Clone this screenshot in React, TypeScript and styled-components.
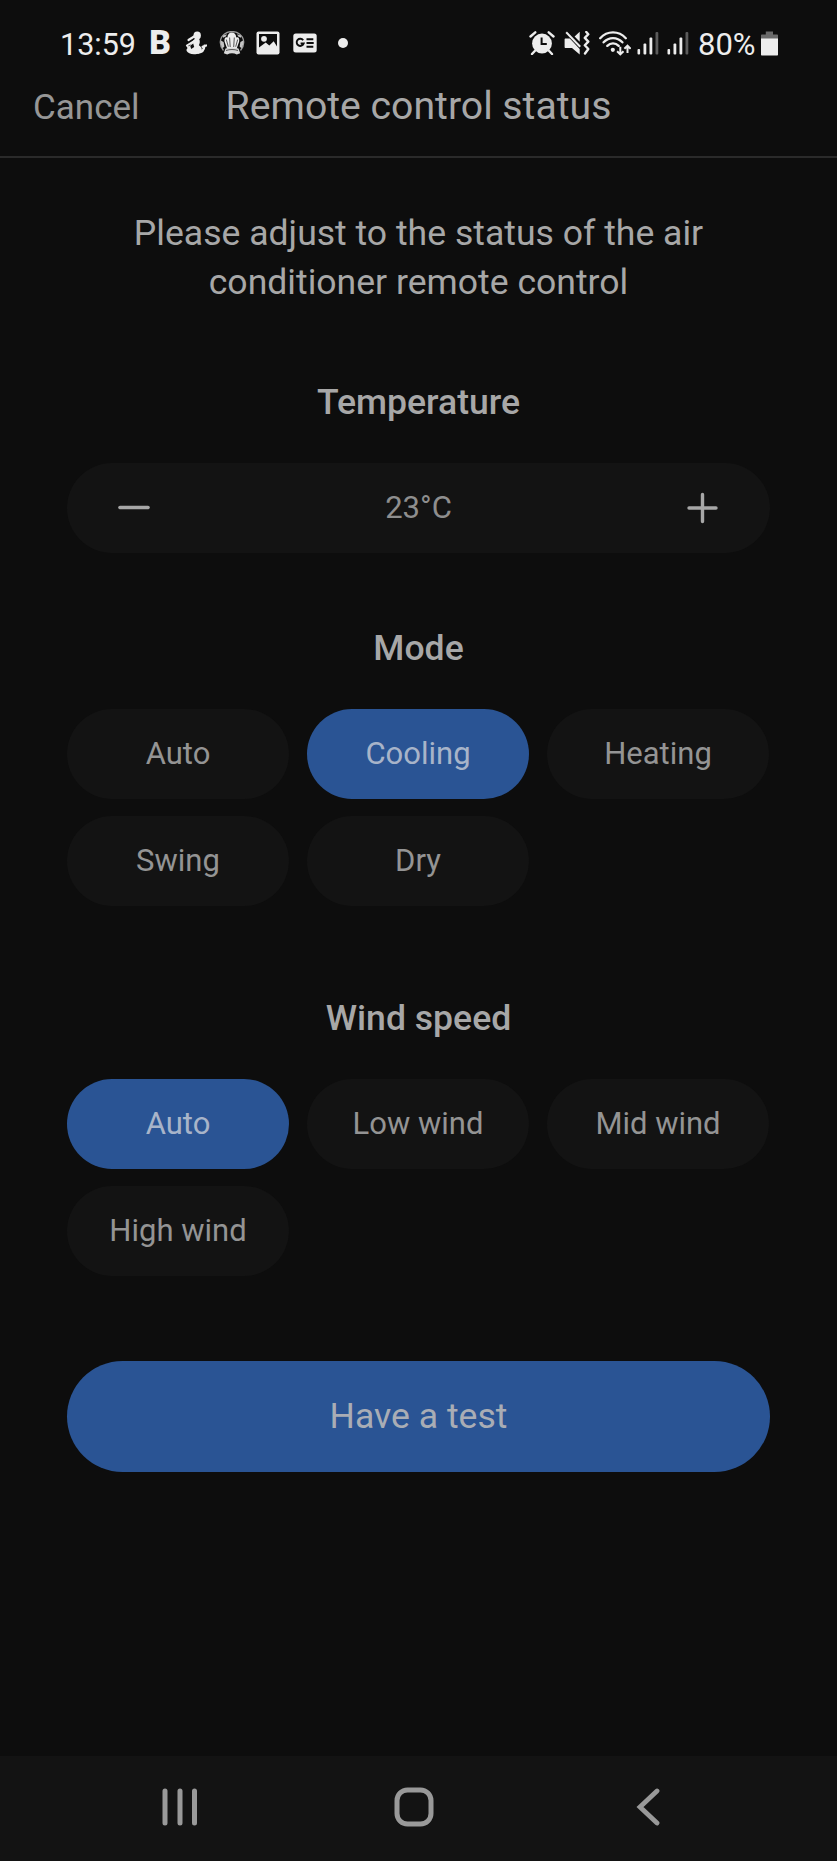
import React, { useState } from "react";
import styled, { createGlobalStyle } from "styled-components";

const GlobalStyle = createGlobalStyle`
  *, *::before, *::after { box-sizing: border-box; }
  html, body { margin: 0; background: #0d0d0d; }
  body { font-family: Roboto, "Liberation Sans", sans-serif; }
  button { font: inherit; border: 0; margin: 0; padding: 0; background: none; cursor: pointer; }
`;

const Screen = styled.div`
  width: 837px;
  height: 1861px;
  display: flex;
  flex-direction: column;
  overflow: hidden;
  background: #0d0d0d;
  color: #a7a7a7;
`;

const StatusBar = styled.div`
  flex: none;
  height: 74px;
  padding: 12px 59px 0 60px;
  display: flex;
  align-items: center;
  justify-content: space-between;
  color: #ededed;
`;

const StatusGroup = styled.div`
  display: flex;
  align-items: center;
`;

const StatusText = styled.span<{ $width: number; $size: number }>`
  width: ${(p) => p.$width}px;
  font-size: ${(p) => p.$size}px;
  line-height: 36px;
  padding-top: 3px;
`;

const BrandLetter = styled.span`
  width: 22px;
  margin-right: 14px;
  font-size: 33.5px;
  font-weight: 900;
  line-height: 36px;
  text-align: center;
`;

const StatusIcon = styled.svg<{ $gap?: number }>`
  display: block;
  flex: none;
  margin-right: ${(p) => p.$gap ?? 0}px;
`;

const Header = styled.header`
  flex: none;
  height: 84px;
  padding: 9px 33px 0;
  display: grid;
  grid-template-columns: 1fr auto 1fr;
  align-items: baseline;
  border-bottom: 2px solid #2a2a2a;
`;

const CancelButton = styled.button`
  justify-self: start;
  font-size: 35px;
  line-height: 47px;
  color: #969696;
`;

const Title = styled.h1`
  margin: 0;
  font-size: 39.2px;
  font-weight: 400;
  line-height: 47px;
  white-space: nowrap;
`;

const Content = styled.main`
  flex: none;
  padding: 51px 67px 0 67px;
`;

const Prompt = styled.p`
  margin: 0 auto;
  width: 620px;
  font-size: 35.6px;
  line-height: 49px;
  text-align: center;
`;

const Section = styled.section<{ $top: number }>`
  margin-top: ${(p) => p.$top}px;
`;

const SectionTitle = styled.h2`
  margin: 0 0 40px;
  font-size: 35.6px;
  font-weight: 500;
  line-height: 42px;
  text-align: center;
`;

const Stepper = styled.div`
  height: 90px;
  padding: 0 43px;
  display: flex;
  align-items: center;
  justify-content: space-between;
  border-radius: 45px;
  background: #131313;
`;

const StepButton = styled.button`
  width: 48px;
  height: 48px;
  display: grid;
  place-items: center;
  color: #a7a7a7;
`;

const StepValue = styled.span`
  font-size: 31px;
  line-height: 36px;
  color: #8e8e8e;
`;

const Options = styled.div`
  display: grid;
  grid-template-columns: repeat(3, 222px);
  column-gap: 18px;
  row-gap: 17px;
`;

const Option = styled.button<{ $active: boolean }>`
  height: 90px;
  border-radius: 45px;
  font-size: 31px;
  line-height: 36px;
  background: ${(p) => (p.$active ? "#2a5494" : "#131313")};
  color: ${(p) => (p.$active ? "#a8b4c9" : "#949494")};
`;

const TestButton = styled.button`
  display: block;
  width: 100%;
  height: 111px;
  margin-top: 85px;
  padding-bottom: 2px;
  border-radius: 56px;
  font-size: 35.6px;
  line-height: 42px;
  background: #2a5494;
  color: #a9adb5;
`;

const NavBar = styled.nav`
  flex: none;
  height: 105px;
  margin-top: auto;
  padding: 0 158px 3px 149px;
  display: flex;
  align-items: center;
  justify-content: space-between;
  background: #131313;
  color: #999;
`;

const NavButton = styled.button`
  width: 62px;
  height: 62px;
  display: grid;
  place-items: center;
  color: inherit;
`;

const MermaidIcon = () => (
  <StatusIcon $gap={12} width="22" height="24" viewBox="0 0 22 24" fill="currentColor">
    <ellipse cx="12.200" cy="4.400" rx="3.700" ry="3.900" />
    <path d="M9.500 5.200 3.500 9" stroke="currentColor" strokeWidth="2.200" strokeLinecap="round" />
    <path d="M9.300 8.300c1.700-1.200 4-1.200 5 0 .9 2.200.5 4.200-.4 6 1.800 1.200 3 2.900 3 4.600-.8 3-3.700 4.300-7.900 4.300-3.700 0-6.300-1.300-7.300-3.200-.5-1.300 0-2.300 1.300-3.200z" />
    <path d="m9.500 9.800-7.600 4.700 2.600 3.400" fill="none" stroke="currentColor" strokeWidth="2" strokeLinejoin="round" />
    <path d="M5.200 14.700 8.200 12.600l1 3.500-3 1.900z" fill="#0d0d0d" />
    <path d="M13 21.500c4 .2 6-2.300 6.500-6.800M17.600 15.800l3.500-1.300" fill="none" stroke="currentColor" strokeWidth="2.300" strokeLinecap="round" />
  </StatusIcon>
);

const TrophyIcon = () => (
  <StatusIcon $gap={11} width="26" height="24" viewBox="0 0 26 24" fill="none">
    <path d="M4.5 19.5C-.2 14 .4 6.8 5.500 3 10-.3 16-.3 20.500 3c5.100 3.800 5.700 11 1 16.500" stroke="#9c9c9c" strokeWidth="1.300" />
    <path d="M12.800 1.500c2.500 0 4.200 1.800 4.500 5 2-1.300 3.500 1 2.800 4.200l-2.300 6.500H8l-2.400-6.500c-.7-3.200.9-5.500 2.800-4.200.3-3.200 2-5 4.400-5z" fill="#ededed" />
    <path d="M1.800 9.500 4.600 11l.8 4.500-1.800 1.800C1.900 15 1.300 12.200 1.800 9.500zm22.400 0L21.400 11l-.8 4.500 1.800 1.800c1.700-2.300 2.300-5.100 1.800-7.800zM4 4.500 8 3.300 6.800 5.600 4 6.800zm18 0-4-1.200 1.200 2.300L22 6.800z" fill="#c4c4c4" />
    <path d="M6.500 17.500c4-1.500 9-1.500 13 0l1.700 4.700-3.400 1.200c-3.100-1.600-6.500-1.600-9.600 0l-3.400-1.200z" fill="#d8d8d8" />
    <path d="m10.600 6.500.6 9.500M15.300 6.500l-.6 9.500M7.300 8.500l2 7.200m9.400-7.200-2 7.200M7 19.500c3.700-1.300 8.300-1.300 12 0" stroke="#555" strokeWidth="1" />
  </StatusIcon>
);

const GalleryIcon = () => (
  <StatusIcon $gap={13} width="24" height="24" viewBox="0 0 24 24">
    <rect x=".5" y=".5" width="23" height="23" rx="2" fill="#ededed" />
    <path d="M3 3h18v12.500l-3.300-5.200-4.400 4.300-3.600-3.100L3 16.500z" fill="#0d0d0d" />
    <circle cx="8" cy="7.800" r="2.900" fill="#ededed" />
  </StatusIcon>
);

const NewsIcon = () => (
  <StatusIcon $gap={20} width="24" height="20" viewBox="0 0 24 20">
    <rect x=".3" y=".5" width="23.400" height="19" rx="2.500" fill="#ededed" />
    <path d="M10.200 7.200A3.600 3.600 0 1 0 10.700 10.500H7.600" fill="none" stroke="#0d0d0d" strokeWidth="1.900" />
    <path d="M13.500 6.200h6.800M13.500 10h7.200M13.500 13.800h6.800" stroke="#0d0d0d" strokeWidth="1.900" />
  </StatusIcon>
);

const DotIcon = () => (
  <StatusIcon width="12" height="12" viewBox="0 0 12 12">
    <circle cx="6" cy="6" r="5" fill="currentColor" />
  </StatusIcon>
);

const AlarmIcon = () => (
  <StatusIcon $gap={9} width="26" height="24" viewBox="0 0 26 24">
    <circle cx="13" cy="12.500" r="9.900" fill="currentColor" />
    <path d="M1.500 5.500 6.300 1.300M24.500 5.500l-4.800-4.200M5.800 20 3 23m17.200-3 2.800 3" stroke="currentColor" strokeWidth="2.400" strokeLinecap="round" />
    <path d="M12.600 6.500v6.600h5.200" fill="none" stroke="#0d0d0d" strokeWidth="2" />
  </StatusIcon>
);

const MuteVibrateIcon = () => (
  <StatusIcon $gap={9} width="26" height="24" viewBox="0 0 26 24">
    <path d="M.6 8.500c0-.6.400-1 1-1h4.200L15.700 18v5.500L8 17H1.600c-.6 0-1-.4-1-1zM10.600 5.400 15.700.7v10z" fill="currentColor" />
    <path d="m2.200 1.200 14 14.600" stroke="currentColor" strokeWidth="2" />
    <path d="m22.300 1 2 2.200-3.500 3.700 3.500 3.700-3.500 3.700 3.500 3.700-3.300 4.500" fill="none" stroke="currentColor" strokeWidth="2.400" strokeLinejoin="round" strokeLinecap="round" />
  </StatusIcon>
);

const WifiIcon = () => (
  <StatusIcon $gap={6} width="32" height="25" viewBox="0 0 32 25" fill="none" stroke="currentColor">
    <path d="M1.200 7.200C8.300-.6 19.700-.6 26.800 7.200M4.600 11.300c5.300-5.600 13.500-5.600 18.800 0M8.300 14.900c3.300-3.400 8.100-3.400 11.400 0" strokeWidth="2.300" strokeLinecap="round" />
    <circle cx="13.800" cy="18.800" r="2.100" fill="currentColor" stroke="none" />
    <path d="M21.300 15.800v7.400m-3.200-3 3.200 3.200 3.200-3.200M28.500 22v-7.200m-3.100 3 3.100-3.200 3.100 3.200" strokeWidth="2" />
  </StatusIcon>
);

const SignalIcon = ({ gap }: { gap: number }) => (
  <StatusIcon $gap={gap} width="22" height="24" viewBox="0 0 22 24" fill="currentColor">
    <rect x=".5" y="18" width="2.600" height="5.500" rx="1" />
    <rect x="6.500" y="12.500" width="2.800" height="11" rx="1" />
    <rect x="12.500" y="6.500" width="2.800" height="17" rx="1" />
    <rect x="18.500" y="1" width="2.800" height="22.500" rx="1" fill="#5b5b5b" />
  </StatusIcon>
);

const BatteryIcon = () => (
  <StatusIcon width="17" height="25" viewBox="0 0 17 25">
    <path d="M4.800 0.500h7.200v3H16c.6 0 1 .4 1 1V8H0V4.500c0-.6.400-1 1-1h3.800z" fill="#6a6a6a" />
    <path d="M0 7.500h17v16c0 .6-.4 1-1 1H1c-.6 0-1-.4-1-1z" fill="#ededed" />
  </StatusIcon>
);

const MODES = ["Auto", "Cooling", "Heating", "Swing", "Dry"];
const SPEEDS = ["Auto", "Low wind", "Mid wind", "High wind"];

interface OptionGroupProps {
  items: string[];
  value: string;
  onChange: (item: string) => void;
}

const OptionGroup = ({ items, value, onChange }: OptionGroupProps) => (
  <Options>
    {items.map((item) => (
      <Option key={item} $active={item === value} onClick={() => onChange(item)}>
        {item}
      </Option>
    ))}
  </Options>
);

export default function App() {
  const [temperature, setTemperature] = useState(23);
  const [mode, setMode] = useState("Cooling");
  const [speed, setSpeed] = useState("Auto");

  return (
    <>
      <GlobalStyle />
      <Screen>
        <StatusBar>
          <StatusGroup>
            <StatusText $width={89} $size={30.5}>13:59</StatusText>
            <BrandLetter>B</BrandLetter>
            <MermaidIcon />
            <TrophyIcon />
            <GalleryIcon />
            <NewsIcon />
            <DotIcon />
          </StatusGroup>
          <StatusGroup>
            <AlarmIcon />
            <MuteVibrateIcon />
            <WifiIcon />
            <SignalIcon gap={8} />
            <SignalIcon gap={9} />
            <StatusText $width={63} $size={31}>80%</StatusText>
            <BatteryIcon />
          </StatusGroup>
        </StatusBar>

        <Header>
          <CancelButton>Cancel</CancelButton>
          <Title>Remote control status</Title>
        </Header>

        <Content>
          <Prompt>Please adjust to the status of the air conditioner remote control</Prompt>

          <Section $top={74}>
            <SectionTitle>Temperature</SectionTitle>
            <Stepper>
              <StepButton aria-label="Decrease" onClick={() => setTemperature(temperature - 1)}>
                <svg width="32" height="32" viewBox="0 0 32 32">
                  <path d="M2 15.500h28" stroke="currentColor" strokeWidth="3.600" strokeLinecap="round" />
                </svg>
              </StepButton>
              <StepValue>{temperature}°C</StepValue>
              <StepButton aria-label="Increase" onClick={() => setTemperature(temperature + 1)}>
                <svg width="32" height="32" viewBox="0 0 32 32">
                  <path d="M2 16h27M15.500 2.500v27" stroke="currentColor" strokeWidth="3.400" strokeLinecap="round" />
                </svg>
              </StepButton>
            </Stepper>
          </Section>

          <Section $top={74}>
            <SectionTitle>Mode</SectionTitle>
            <OptionGroup items={MODES} value={mode} onChange={setMode} />
          </Section>

          <Section $top={91}>
            <SectionTitle>Wind speed</SectionTitle>
            <OptionGroup items={SPEEDS} value={speed} onChange={setSpeed} />
          </Section>

          <TestButton>Have a test</TestButton>
        </Content>

        <NavBar>
          <NavButton aria-label="Recent apps">
            <svg width="36" height="38" viewBox="0 0 36 38">
              <path d="M3 3v32M18 3v32M32.500 3v32" stroke="currentColor" strokeWidth="5" strokeLinecap="round" />
            </svg>
          </NavButton>
          <NavButton aria-label="Home">
            <svg width="40" height="40" viewBox="0 0 40 40">
              <rect x="3" y="3" width="34" height="34" rx="10.500" fill="none" stroke="currentColor" strokeWidth="5" />
            </svg>
          </NavButton>
          <NavButton aria-label="Back">
            <svg width="24" height="38" viewBox="0 0 24 38">
              <path d="M21 3 4 19l17 16" fill="none" stroke="currentColor" strokeWidth="4.800" strokeLinecap="round" />
            </svg>
          </NavButton>
        </NavBar>
      </Screen>
    </>
  );
}
